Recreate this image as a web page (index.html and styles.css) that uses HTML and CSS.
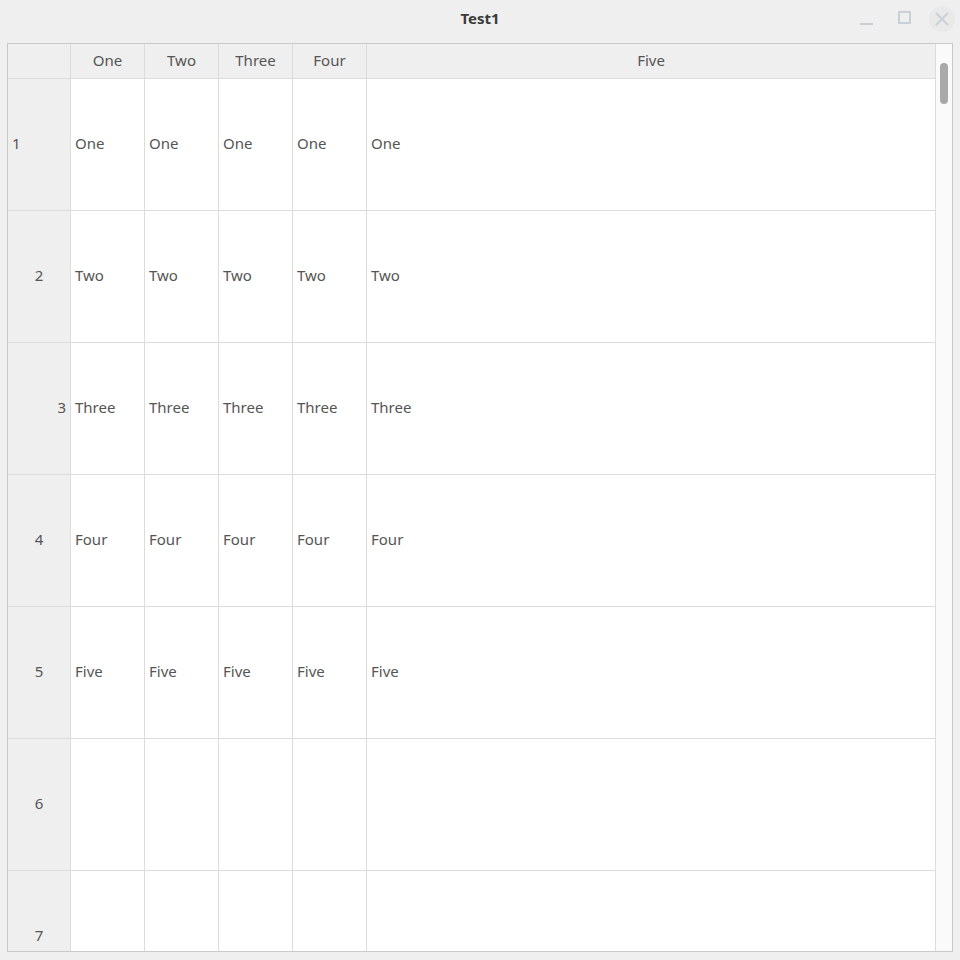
FILE: index.html
```html
<!DOCTYPE html>
<html>
<head>
<meta charset="utf-8">
<link rel="stylesheet" href="styles.css">
</head>
<body>
<div class="window">
  <div class="titlebar">
    <div class="title">Test1</div>
    <div class="controls">
      <svg class="btn" width="20" height="20" viewBox="0 0 20 20"><rect x="3" y="13" width="13" height="2" fill="#c9d1d8"/></svg>
      <svg class="btn" width="20" height="20" viewBox="0 0 20 20"><rect x="4" y="3" width="11" height="11" fill="none" stroke="#c9d1d8" stroke-width="2"/></svg>
      <span class="close"><svg width="20" height="20" viewBox="0 0 20 20"><path d="M4 3 L16 15 M16 3 L4 15" stroke="#c9d1d8" stroke-width="2" fill="none"/></svg></span>
    </div>
  </div>
  <div class="frame">
    <div class="table">
      <div class="grid">
        <div class="corner"></div>
        <div class="hh">One</div>
        <div class="hh">Two</div>
        <div class="hh">Three</div>
        <div class="hh">Four</div>
        <div class="hh">Five</div>

        <div class="vh left">1</div>
        <div class="cell">One</div><div class="cell">One</div><div class="cell">One</div><div class="cell">One</div><div class="cell">One</div>

        <div class="vh">2</div>
        <div class="cell">Two</div><div class="cell">Two</div><div class="cell">Two</div><div class="cell">Two</div><div class="cell">Two</div>

        <div class="vh right">3</div>
        <div class="cell">Three</div><div class="cell">Three</div><div class="cell">Three</div><div class="cell">Three</div><div class="cell">Three</div>

        <div class="vh">4</div>
        <div class="cell">Four</div><div class="cell">Four</div><div class="cell">Four</div><div class="cell">Four</div><div class="cell">Four</div>

        <div class="vh">5</div>
        <div class="cell">Five</div><div class="cell">Five</div><div class="cell">Five</div><div class="cell">Five</div><div class="cell">Five</div>

        <div class="vh">6</div>
        <div class="cell"></div><div class="cell"></div><div class="cell"></div><div class="cell"></div><div class="cell"></div>

        <div class="vh">7</div>
        <div class="cell"></div><div class="cell"></div><div class="cell"></div><div class="cell"></div><div class="cell"></div>
      </div>
    </div>
    <div class="scrollbar"><div class="thumb"></div></div>
  </div>
</div>
</body>
</html>
```
FILE: styles.css
```css
html, body {
  margin: 0;
  padding: 0;
  background: #efefef;
  font-family: "Noto Sans", "Open Sans", sans-serif;
}
.window {
  width: 960px;
  height: 960px;
  display: flex;
  flex-direction: column;
}
.titlebar {
  height: 43px;
  position: relative;
  display: flex;
  align-items: center;
  justify-content: center;
}
.title {
  font-weight: bold;
  font-size: 15px;
  color: #3a3a3a;
  margin-top: -7px;
}
.controls {
  position: absolute;
  right: 5px;
  top: 6px;
  display: flex;
  gap: 17px;
  align-items: center;
}
.btn { display: block; }
.btn:first-child { margin-top: 1px; margin-right: 1px; }
.close {
  width: 26px;
  height: 26px;
  border-radius: 50%;
  background: #e9e9e9;
  display: flex;
  align-items: center;
  justify-content: center;
  margin-left: -3px;
}
.close svg { display: block; margin-top: 2px; }
.frame {
  margin: 0 7px;
  height: 907px;
  border: 1px solid #c9c9c9;
  display: flex;
  background: #ffffff;
}
.table {
  flex: 1;
  overflow: hidden;
}
.grid {
  display: grid;
  grid-template-columns: 63px 74px 74px 74px 74px 1fr;
  grid-template-rows: 35px repeat(7, 132px);
  font-size: 15px;
  color: #555555;
}
.corner, .hh, .vh, .cell {
  box-sizing: border-box;
  border-right: 1px solid #dcdcdc;
  border-bottom: 1px solid #dcdcdc;
  display: flex;
  align-items: center;
}
.corner, .hh {
  background: #efefef;
}
.hh {
  justify-content: center;
  padding-bottom: 3px;
}
.vh {
  background: #efefef;
  justify-content: center;
  padding: 0 4px 4px;
}
.vh.left { justify-content: flex-start; }
.vh.right { justify-content: flex-end; }
.cell {
  padding-left: 4px;
  padding-bottom: 4px;
  background: #ffffff;
}
.scrollbar {
  width: 16px;
  background: #fafafa;
  position: relative;
}
.thumb {
  position: absolute;
  left: 4px;
  top: 19px;
  width: 8px;
  height: 41px;
  border-radius: 4px;
  background: #a9a9a9;
}
```
